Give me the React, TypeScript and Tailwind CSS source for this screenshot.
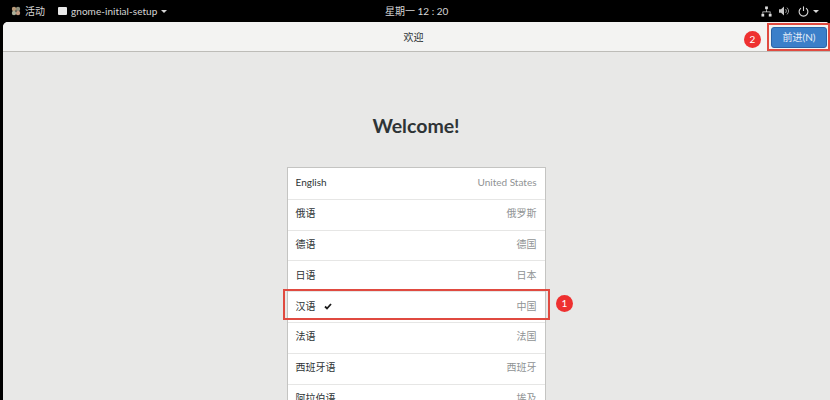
import React from "react";

const font = { fontFamily: 'Lato, "Noto Sans CJK SC", sans-serif' };

const rows: [string, string][] = [
  ["English", "United States"],
  ["俄语", "俄罗斯"],
  ["德语", "德国"],
  ["日语", "日本"],
  ["汉语", "中国"],
  ["法语", "法国"],
  ["西班牙语", "西班牙"],
  ["阿拉伯语", "埃及"],
];

function Badge({ n, cls }: { n: string; cls: string }) {
  return (
    <div className={`absolute w-[17px] h-[17px] rounded-full bg-[#ee3030] text-white text-[10px] leading-[17px] text-center ${cls}`}>
      {n}
    </div>
  );
}

export default function App() {
  return (
    <div style={font} className="relative w-[830px] h-[400px] overflow-hidden bg-black flex flex-col">
      <div className="h-[22px] shrink-0 flex items-center text-[#d6d6d6] text-[10px] relative">
        <div className="flex items-center ml-[11px] gap-[4px]">
          <svg width="10" height="10" viewBox="0 0 10 10">
            <circle cx="3" cy="3" r="2.2" fill="#b99a78" />
            <circle cx="7" cy="3" r="2.2" fill="#8f8f7c" />
            <circle cx="3" cy="7" r="2.2" fill="#a9b09a" />
            <circle cx="7" cy="7" r="2.2" fill="#c29a80" />
            <circle cx="5" cy="5" r="1.2" fill="#6e6a5e" />
          </svg>
          <span>活动</span>
        </div>
        <div className="flex items-center ml-[13px]">
          <div className="w-[9px] h-[8px] bg-[#e8e8e8] rounded-[1px] mr-[4px]" />
          <span className="text-[10px] tracking-[0.05px]">gnome-initial-setup</span>
          <svg className="ml-[4px]" width="6" height="3" viewBox="0 0 6 3"><path d="M0 0h6L3 3z" fill="#d6d6d6" /></svg>
        </div>
        <div className="absolute left-[385px] top-[3px] leading-[16px]">星期一 12 : 20</div>
        <div className="ml-auto flex items-center mr-[11px]">
          <svg width="11" height="11" viewBox="0 0 12 11" fill="#dcdcdc">
            <rect x="4.5" y="0" width="3" height="3" />
            <rect x="0.5" y="8" width="3" height="3" />
            <rect x="8.5" y="8" width="3" height="3" />
            <path d="M5.6 3h.8v2.5H10.4V8h-.8V6.3H2.4V8h-.8V5.5h4z" />
          </svg>
          <svg className="ml-[7px]" width="11" height="10" viewBox="0 0 11 10" fill="#c8c8c8">
            <path d="M0 3.2h2L5 .6v8.8L2 6.8H0z" />
            <path d="M6.4 3a2.6 2.6 0 0 1 0 4M8 1.6a5 5 0 0 1 0 6.8" fill="none" stroke="#9a9a9a" strokeWidth="1" />
          </svg>
          <svg className="ml-[8px]" width="11" height="11" viewBox="0 0 11 11" fill="none" stroke="#dcdcdc" strokeWidth="1.1">
            <path d="M3 2.1a4.4 4.4 0 1 0 5 0" />
            <path d="M5.5 0.4v4.6" />
          </svg>
          <svg className="ml-[4px]" width="6" height="3" viewBox="0 0 6 3"><path d="M0 0h6L3 3z" fill="#d6d6d6" /></svg>
        </div>
      </div>

      <div className="flex-1 ml-[3px] rounded-t-[5px] overflow-hidden bg-[#e8e8e7] flex flex-col min-h-0">
        <div className="h-[30px] shrink-0 bg-[#f3f3f2] border-b border-[#bdbcb8] flex items-center justify-center relative text-[10px] text-[#2e3436]">
          <span className="mr-[6px] mt-[2px]">欢迎</span>
          <div className="absolute right-[3px] top-[5px] w-[56px] h-[21px] rounded-[3px] bg-[#3b7fc9] border border-[#2a63a5] text-[#e6eef7] text-[10px] flex items-center justify-center">
            前进(N)
          </div>
        </div>
        <div className="flex-1 flex flex-col items-center min-h-0">
          <div className="mt-[59px] h-[30px] leading-[30px] text-[19.5px] font-bold text-[#2e3436] ml-[-1px]">Welcome!</div>
          <div className="mt-[26px] w-[259px] ml-[-1px] shrink-0 bg-white border border-[#c4c4c2] text-[10px]">
            {rows.map(([name, place], i) => (
              <div key={name} className={`h-[30.8px] px-[8px] pb-[2px] flex items-center justify-between ${i ? "border-t border-[#e6e6e5]" : ""}`}>
                <span className="text-[#2e3436] flex items-center">
                  {name}
                  {name === "汉语" && (
                    <svg className="ml-[8px]" width="8" height="7" viewBox="0 0 8 7">
                      <path d="M1 3.5l2 2L7 1" fill="none" stroke="#1c1c1c" strokeWidth="1.8" />
                    </svg>
                  )}
                </span>
                <span className="text-[#8f9394]">{place}</span>
              </div>
            ))}
          </div>
        </div>
      </div>

      <div className="absolute left-[283px] top-[289px] w-[267px] h-[31px] border-2 border-[#e04a40]" />
      <div className="absolute left-[767px] top-[23px] w-[63px] h-[28px] border-2 border-[#e04a40]" />
      <Badge n="1" cls="left-[556px] top-[295px]" />
      <Badge n="2" cls="left-[744px] top-[31px]" />
    </div>
  );
}
